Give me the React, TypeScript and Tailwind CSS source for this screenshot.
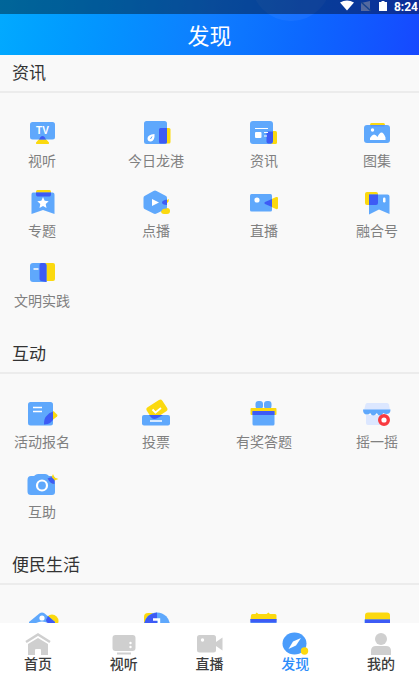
import type { ReactNode } from "react";

const BLUE = "#5fa8fc";
const DARK = "#3d5bf5";
const YELLOW = "#fbd90f";
const PALE = "#dce7ff";
const GREY = "#cfcfcf";

type Item = { label?: string; icon: ReactNode };
type Section = { title: string; items: Item[] };

const sections: Section[] = [
  {
    title: "资讯",
    items: [
      {
        label: "视听",
        icon: (
          <>
            <path d="M14 20q2.500-4 5 0l4 4.500q.5 1.500-1 1.500H11q-1.500 0-1-1.500z" fill={YELLOW} />
            <rect x="4" y="4" width="25" height="17.500" rx="2.500" fill={BLUE} />
            <path d="M13 21.500l1.500-2.500q2-2 4 0l1.500 2.500z" fill={DARK} />
            <text x="16.500" y="16" textAnchor="middle" fontSize="10" fontWeight="700" fill="white" className="font-['Liberation_Sans',sans-serif]">TV</text>
          </>
        ),
      },
      {
        label: "今日龙港",
        icon: (
          <>
            <rect x="20" y="10" width="10.500" height="15.500" rx="1.500" fill={YELLOW} />
            <rect x="4" y="3" width="23" height="23" rx="2.500" fill={BLUE} />
            <path d="M20.500 10H27v14q0 1.500-1.500 1.500h-5q-1.500 0-1.500-1.500V11.500q0-1.500 1.500-1.500z" fill={DARK} />
            <path d="M7.500 20.500q0-4 7-4.500 .5 7-3.500 7.500-3.500.3-3.500-3z" fill="white" />
            <path d="M10.500 21l1.500-2.500" stroke={BLUE} />
          </>
        ),
      },
      {
        label: "资讯",
        icon: (
          <>
            <rect x="20" y="13" width="9" height="13" rx="1.500" fill={YELLOW} />
            <rect x="2" y="3" width="23" height="23" rx="3" fill={BLUE} />
            <path d="M20 13.500h5V23q0 2-2 2.500h-3q-1.500-.5-1.500-2v-8q0-2 1.500-2z" fill={DARK} />
            <rect x="7" y="14" width="6.500" height="6" rx="1" fill="white" />
            <path d="M7 10.500h13M16 14.500h4M16 18h3" stroke="white" strokeWidth="1.200" />
          </>
        ),
      },
      {
        label: "图集",
        icon: (
          <>
            <rect x="9" y="5" width="15" height="5" rx="1.500" fill={YELLOW} />
            <rect x="3" y="7" width="26" height="18" rx="3" fill={BLUE} />
            <path d="M9.500 7.800h14" stroke={DARK} strokeWidth="1" opacity=".4" />
            <circle cx="11.500" cy="12" r="1.700" fill="white" />
            <path d="M9 22v-2q2-3.500 4-3.500t3.500 2.500q2-4.500 4-4.500t4 5V22z" fill="white" />
          </>
        ),
      },
      {
        label: "专题",
        icon: (
          <>
            <rect x="10" y="2" width="15" height="6" rx="1.500" fill={YELLOW} />
            <path d="M7 4.500h19.500q2 0 2 2V26L17 22 5.500 26V6.500q0-2 1.500-2z" fill={BLUE} />
            <path d="M10 4.500h15v2q0 2-1.500 2h-12q-1.500 0-1.500-2z" fill={DARK} />
            <path d="M17 9l1.700 3.700 4 .5-3 2.700.8 4-3.500-2-3.500 2 .8-4-3-2.700 4-.5z" fill="white" />
          </>
        ),
      },
      {
        label: "点播",
        icon: (
          <>
            <path d="M25 13l4-2-.5 2.500-2.500 3z" fill={YELLOW} />
            <rect x="21" y="20" width="9" height="6" rx="3" fill={YELLOW} />
            <path d="M13.500 3q1.500-.8 3 0L26 8q1 .7 1 2v9q0 1.300-1 2l-9.500 4.500q-1.500.8-3 0L4.500 21q-1-.7-1-2v-9q0-1.300 1-2z" fill={BLUE} />
            <path d="M27 11.500V17q-5-.5-5-2.500t5-3z" fill={DARK} />
            <path d="M26.500 20.500q-1 2-5 3 0-3 5-3z" fill={YELLOW} />
            <path d="M12 11v7l7-3.500z" fill="white" />
          </>
        ),
      },
      {
        label: "直播",
        icon: (
          <>
            <path d="M18 13.700L28 9q2-.5 2 1v10q0 1.500-2 1l-10-4.500z" fill={YELLOW} />
            <rect x="2" y="6" width="22" height="17.500" rx="1.500" fill={BLUE} />
            <path d="M24 11v8l-7-3q-1.500-1 0-2z" fill={DARK} />
            <circle cx="9" cy="12" r="2.600" fill="white" />
          </>
        ),
      },
      {
        label: "融合号",
        icon: (
          <>
            <rect x="4" y="4" width="13" height="13" rx="2" fill={YELLOW} />
            <path d="M9 6.500h17.500q2 0 2 2V26L18 21.500 8 26.500V6.500z" fill={BLUE} />
            <path d="M8 6.500h9V15q0 2-2 2H8z" fill={DARK} />
            <rect x="22" y="9.500" width="2.500" height="5" rx="1.200" fill="white" />
          </>
        ),
      },
      {
        label: "文明实践",
        icon: (
          <>
            <path d="M18 5h9q2 0 2 2v14q0 2-2 2h-9z" fill={YELLOW} />
            <path d="M7 5h11q2.500 0 2.500 2.500V24H7q-3 0-3-3V8q0-3 3-3z" fill={BLUE} />
            <path d="M15 5h3q2.500 0 2.500 2.500V24L15 23q-1.500-.3-1.500-2V7q0-1.500 1.500-2z" fill={DARK} />
            <path d="M7.500 11h5" stroke="white" strokeWidth="1.500" />
          </>
        ),
      },
    ],
  },
  {
    title: "互动",
    items: [
      {
        label: "活动报名",
        icon: (
          <>
            <path d="M25 12.500q2-1 3 0l3 3q1 1 0 2l-5 4z" fill={YELLOW} />
            <rect x="2" y="3" width="25" height="23.500" rx="2.500" fill={BLUE} />
            <path d="M27 12.500V21l-3 3q-1.500 1-6 1.500 0-6 2-8 3-4 7-5z" fill={DARK} />
            <path d="M7 8.500h9M7 12.500h9" stroke="white" strokeWidth="1.700" />
          </>
        ),
      },
      {
        label: "投票",
        icon: (
          <>
            <rect x="7.500" y="3.500" width="18.500" height="13.500" rx="2.500" transform="rotate(-33 17 10)" fill={YELLOW} />
            <rect x="2" y="16" width="28" height="10.500" rx="2" fill={BLUE} />
            <path d="M9 16h14l-6 3.300q-3 1.300-5 0z" fill={DARK} />
            <path d="M12.500 10.500l3 3 5.500-4.500" fill="none" stroke="white" strokeWidth="1.800" />
            <path d="M10 22h12" stroke="white" strokeWidth="1.500" />
          </>
        ),
      },
      {
        label: "有奖答题",
        icon: (
          <>
            <rect x="7.500" y="2" width="7.500" height="8" rx="3" fill={BLUE} />
            <rect x="16" y="2" width="7.500" height="8" rx="3" fill={BLUE} />
            <rect x="2.500" y="9" width="26" height="7" rx="1" fill={YELLOW} />
            <rect x="4.500" y="12" width="22" height="14.500" rx="1.500" fill={BLUE} />
            <path d="M4.500 12h22v4h-22z" fill={DARK} />
          </>
        ),
      },
      {
        label: "摇一摇",
        icon: (
          <>
            <path d="M5 16h20v8q0 2-2 2H7q-2 0-2-2z" fill={PALE} />
            <path d="M6 4h20q1.500 0 2 1.500L29 11H3l1.500-5.500Q5 4 6 4z" fill={PALE} />
            <path d="M2 10.500h27.500q0 4.500-4 4.500-2 0-3.200-1-1.500 2.500-3.300 2.500T15.800 14Q14 16.500 12.300 16.500T9.200 14Q8 15.500 6 15.500q-4 0-4-5z" fill={BLUE} />
            <circle cx="23" cy="21" r="4.300" fill="white" stroke="#f93a40" strokeWidth="3.400" />
          </>
        ),
      },
      {
        label: "互助",
        icon: (
          <>
            <path d="M8 7l2-1.500q1-.5 2-.5h7q1.500 0 2.500.7L23 7h3q3 0 3 3v13q0 3-3 3H5q-3.500 0-3.500-3.500V11Q1.500 7 5 7z" fill={BLUE} />
            <path d="M27 5l1.500 3.500 4 1.500-4 1.500L26.500 15l-2-3.500-3-1.500 4-1.500z" fill={YELLOW} />
            <path d="M21.500 9.500L25.500 8l3 3v4q-4 0-7-5.500z" fill={DARK} />
            <circle cx="16" cy="16.500" r="5" fill="none" stroke="white" strokeWidth="2.200" />
          </>
        ),
      },
    ],
  },
  {
    title: "便民生活",
    items: [
      {
        icon: (
          <>
            <circle cx="26" cy="11" r="6.500" fill={YELLOW} />
            <path d="M14 3q2-1 4 0l11 9v14H3V12z" fill={BLUE} />
            <path d="M20 10l2-4 7 6v1h-8z" fill={DARK} />
            <circle cx="16" cy="8" r="2.600" fill="white" />
            <path d="M10 13q6-3 12 0v3H10z" fill="white" />
          </>
        ),
      },
      {
        icon: (
          <>
            <rect x="4" y="3" width="13" height="13" rx="4" fill={YELLOW} />
            <circle cx="17" cy="15.500" r="13" fill={BLUE} />
            <path d="M4 15.500Q5 4 17 2.500v10q0 3-3 3z" fill={DARK} />
            <path d="M13 9.500h6v4l-4 3" fill="none" stroke="white" strokeWidth="2.400" />
          </>
        ),
      },
      {
        icon: (
          <>
            <path d="M3 5.500q0-1.500 1.500-1.500h3l1-1.500 2 1.500h8l2-1.500 1.500 1.500h5q1.500 0 1.500 1.500V10h-26z" fill={YELLOW} />
            <path d="M2.500 9h26v16h-26z" fill={BLUE} />
            <path d="M2.500 9h26v3.500h-26z" fill={DARK} />
          </>
        ),
      },
      {
        icon: (
          <>
            <rect x="4" y="2.500" width="25" height="12" rx="3" fill={YELLOW} />
            <path d="M3.500 9.500h25.500v16H3.500z" fill={BLUE} />
            <path d="M4 9.500h25v4H4z" fill={DARK} />
          </>
        ),
      },
    ],
  },
];

const tabs: { label: string; active?: boolean; icon: ReactNode }[] = [
  {
    label: "首页",
    icon: (
      <>
        <path d="M2 10L14 2.500 26 10" fill="none" stroke={GREY} strokeWidth="2.500" />
        <path d="M14 6l10 6v11h-7v-5q0-1-1-1h-4q-1 0-1 1v5H4V12z" fill={GREY} />
      </>
    ),
  },
  {
    label: "视听",
    icon: (
      <>
        <rect x="2.500" y="3" width="23" height="16" rx="3" fill={GREY} />
        <path d="M7 21.500h14" stroke={GREY} strokeWidth="2" />
        <circle cx="20.500" cy="11" r="1.200" fill="white" />
        <circle cx="20.500" cy="15" r="1.200" fill="white" />
      </>
    ),
  },
  {
    label: "直播",
    icon: (
      <>
        <rect x="1" y="3" width="19" height="17.500" rx="2.500" fill={GREY} />
        <path d="M20 10l6.500-4.500v13L20 14z" fill={GREY} />
        <circle cx="6.500" cy="8" r="1.700" fill="white" />
      </>
    ),
  },
  {
    label: "发现",
    active: true,
    icon: (
      <>
        <ellipse cx="13.500" cy="11.500" rx="12" ry="11" fill="#4a9cfb" />
        <path d="M20 6l-5 7.500L7.500 17l4.500-7.500z" fill="white" />
        <circle cx="23.500" cy="19" r="3.700" fill={YELLOW} />
      </>
    ),
  },
  {
    label: "我的",
    icon: (
      <>
        <circle cx="14" cy="7" r="6" fill={GREY} />
        <path d="M4 23v-4q0-5 5-5h10q5 0 5 5v4z" fill={GREY} />
      </>
    ),
  },
];

function StatusBar() {
  return (
    <div className="relative flex h-[14px] items-center justify-end bg-black/40 pr-px text-white">
      <svg viewBox="0 0 48 14" className="mr-1.5 h-[14px] w-12" aria-hidden="true">
        <path d="M0 2.500q7-4 14 0L7 10.500z" fill="white" />
        <path d="M21 3l9-2v10h-9z" fill="#54699f" />
        <path d="M21 2l10 9" stroke="#17428d" strokeWidth="1.500" />
        <path d="M39 2h2.500V1h3v1H47v9h-8z" fill="white" />
      </svg>
      <span className="font-['Roboto',sans-serif] text-xs leading-3 font-bold">8:24</span>
    </div>
  );
}

export default function App() {
  return (
    <div className="flex h-screen flex-col bg-[#f9f9f9] font-['Noto_Sans','Noto_Sans_CJK_SC',sans-serif]">
      <header className="relative shrink-0 overflow-hidden bg-linear-100 from-[#02aaff] via-[#0f7dff] to-[#1748ff]">
        <div className="absolute top-[-59px] left-[60%] size-20 rounded-full bg-white/5" />
        <StatusBar />
        <h1 className="relative flex h-[41px] items-center justify-center text-[22px] leading-8 text-white">
          发现
        </h1>
      </header>

      <main className="min-h-0 flex-1 overflow-y-auto [scrollbar-width:none]">
        {sections.map((section) => (
          <section key={section.title}>
            <h2 className="flex h-[38px] items-center border-b-2 border-[#ececec] px-3 text-[17px] leading-6 text-[#333]">
              {section.title}
            </h2>
            <div className="grid grid-cols-[114fr_108fr_113fr_56px] gap-y-[17px] px-[14px] py-[25px]">
              {section.items.map((item, i) => (
                <button key={i} type="button" className="flex w-14 flex-col items-center gap-[5px]">
                  <svg viewBox="0 0 32 28" className="h-7 w-8 overflow-visible" aria-hidden="true">
                    {item.icon}
                  </svg>
                  {item.label && (
                    <span className="text-sm leading-5 whitespace-nowrap text-[#808080]">{item.label}</span>
                  )}
                </button>
              ))}
            </div>
          </section>
        ))}
      </main>

      <nav className="flex h-[66px] shrink-0 justify-between bg-white px-[18px] pt-[9px]">
        {tabs.map((tab) => (
          <button
            key={tab.label}
            type="button"
            aria-current={tab.active ? "page" : undefined}
            className={`flex w-10 flex-col items-center ${tab.active ? "text-[#2b8cfa]" : "text-[#3c3c3c]"}`}
          >
            <svg viewBox="0 0 28 24" className="h-6 w-7" aria-hidden="true">
              {tab.icon}
            </svg>
            <span className="text-sm leading-4 font-medium">{tab.label}</span>
          </button>
        ))}
      </nav>
    </div>
  );
}
